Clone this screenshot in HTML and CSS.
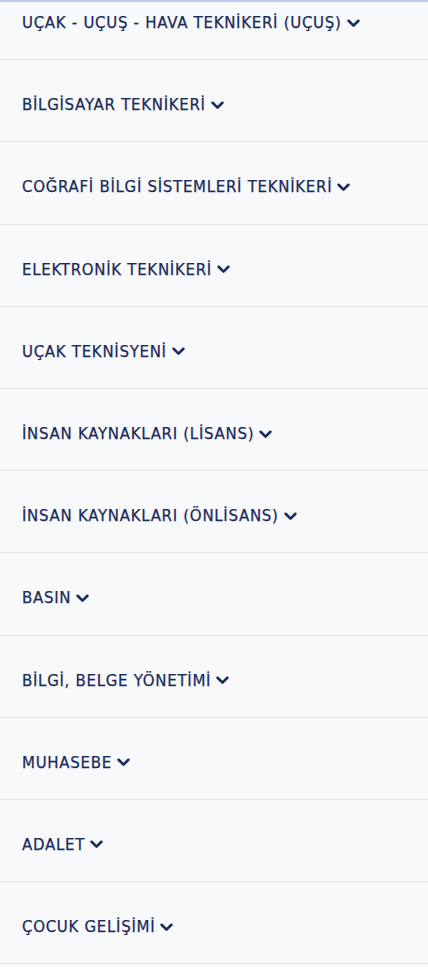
FILE: index.html
```html
<!DOCTYPE html>
<html lang="tr">
<head>
  <meta charset="UTF-8">
  <meta name="viewport" content="width=device-width, initial-scale=1">
  <title>Programlar</title>
  <link rel="stylesheet" href="styles.css">
</head>
<body>

<div class="top-bar"></div>

<div class="list-view">
  <ul class="program-list">
    <li class="program-item"><span class="program-name">UÇAK - UÇUŞ - HAVA TEKNİKERİ (UÇUŞ)</span><svg class="chevron" viewBox="0 0 12 8"><path d="M1.5 1.5 6 6l4.5-4.5"/></svg></li>
    <li class="program-item"><span class="program-name">BİLGİSAYAR TEKNİKERİ</span><svg class="chevron" viewBox="0 0 12 8"><path d="M1.5 1.5 6 6l4.5-4.5"/></svg></li>
    <li class="program-item"><span class="program-name">COĞRAFİ BİLGİ SİSTEMLERİ TEKNİKERİ</span><svg class="chevron" viewBox="0 0 12 8"><path d="M1.5 1.5 6 6l4.5-4.5"/></svg></li>
    <li class="program-item"><span class="program-name">ELEKTRONİK TEKNİKERİ</span><svg class="chevron" viewBox="0 0 12 8"><path d="M1.5 1.5 6 6l4.5-4.5"/></svg></li>
    <li class="program-item"><span class="program-name">UÇAK TEKNİSYENİ</span><svg class="chevron" viewBox="0 0 12 8"><path d="M1.5 1.5 6 6l4.5-4.5"/></svg></li>
    <li class="program-item"><span class="program-name">İNSAN KAYNAKLARI (LİSANS)</span><svg class="chevron" viewBox="0 0 12 8"><path d="M1.5 1.5 6 6l4.5-4.5"/></svg></li>
    <li class="program-item"><span class="program-name">İNSAN KAYNAKLARI (ÖNLİSANS)</span><svg class="chevron" viewBox="0 0 12 8"><path d="M1.5 1.5 6 6l4.5-4.5"/></svg></li>
    <li class="program-item"><span class="program-name">BASIN</span><svg class="chevron" viewBox="0 0 12 8"><path d="M1.5 1.5 6 6l4.5-4.5"/></svg></li>
    <li class="program-item"><span class="program-name">BİLGİ, BELGE YÖNETİMİ</span><svg class="chevron" viewBox="0 0 12 8"><path d="M1.5 1.5 6 6l4.5-4.5"/></svg></li>
    <li class="program-item"><span class="program-name">MUHASEBE</span><svg class="chevron" viewBox="0 0 12 8"><path d="M1.5 1.5 6 6l4.5-4.5"/></svg></li>
    <li class="program-item"><span class="program-name">ADALET</span><svg class="chevron" viewBox="0 0 12 8"><path d="M1.5 1.5 6 6l4.5-4.5"/></svg></li>
    <li class="program-item"><span class="program-name">ÇOCUK GELİŞİMİ</span><svg class="chevron" viewBox="0 0 12 8"><path d="M1.5 1.5 6 6l4.5-4.5"/></svg></li>
  </ul>
</div>

</body>
</html>
```

FILE: styles.css
```css
body {
  margin: 0;
  padding: 0;
  background: #f8f9fb;
  font-family: "DejaVu Sans", Verdana, sans-serif;
  color: #1b2a5c;
  height: 967px;
  overflow: hidden;
}

.top-bar {
  height: 2px;
  background: #b9c9ef;
}

.list-view {
  overflow: hidden;
}

.program-list {
  list-style: none;
  margin: -24px 0 0 0;
  padding: 0;
}

.program-item {
  box-sizing: border-box;
  height: 82.2px;
  display: flex;
  align-items: center;
  gap: 5px;
  padding: 9px 22px 0;
  border-bottom: 1px solid #e2e4ea;
}

.program-name {
  font-size: 15px;
  font-weight: normal;
  letter-spacing: 0.7px;
  -webkit-text-stroke: 0.25px #1b2a5c;
}

/* açılır ok */
.chevron {
  width: 13px;
  height: 9px;
  fill: none;
  stroke: #1b2a5c;
  stroke-width: 2.4;
  stroke-linecap: round;
  stroke-linejoin: round;
}
```
